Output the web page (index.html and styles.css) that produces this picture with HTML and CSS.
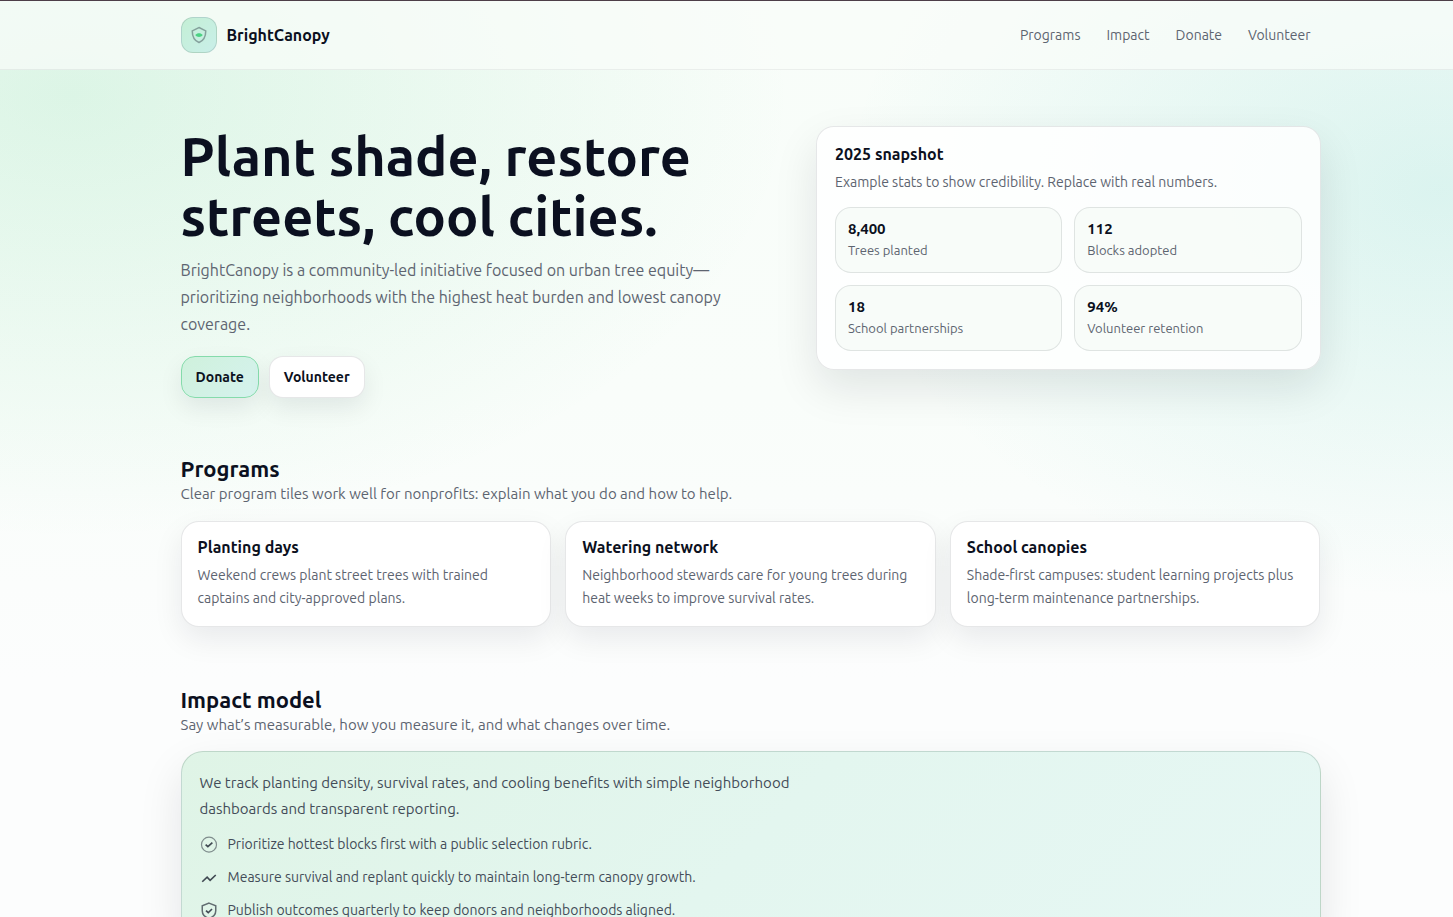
FILE: index.html
```
<!DOCTYPE html>
<html lang="en">
<head>
<meta charset="utf-8">
<meta name="viewport" content="width=device-width, initial-scale=1">
<title>BrightCanopy</title>
<link rel="stylesheet" href="styles.css">
</head>
<body>
<header class="site-header">
  <div class="wrap header-row">
    <a class="brand" href="#top">
      <span class="brand-mark">
        <svg width="18" height="18" viewBox="0 0 24 24" fill="none" aria-hidden="true">
          <path d="M12 2l9 4.500c0 8-2 12.500-9 15.500-7-3-9-7.500-9-15.500L12 2z" stroke="#0b1020" stroke-opacity=".35" stroke-width="2"/>
          <path d="M7 12c1.500-2 3-2.500 5-2.500s3.500.5 5 2.500c-1.500 2-3 2.500-5 2.500S8.500 14 7 12z" fill="#4bd283"/>
        </svg>
      </span>
      BrightCanopy
    </a>
    <nav class="nav" aria-label="Main">
      <a href="#programs">Programs</a>
      <a href="#impact">Impact</a>
      <a href="#donate">Donate</a>
      <a href="#volunteer">Volunteer</a>
    </nav>
  </div>
</header>

<main id="top">
  <section class="wrap hero">
    <div>
      <h1>Plant shade, restore streets, cool cities.</h1>
      <p class="lead">BrightCanopy is a community-led initiative focused on urban tree equity—prioritizing neighborhoods with the highest heat burden and lowest canopy coverage.</p>
      <div class="actions">
        <a class="btn btn-primary" href="#donate">Donate</a>
        <a class="btn" href="#volunteer">Volunteer</a>
      </div>
    </div>
    <aside class="snapshot">
      <h3>2025 snapshot</h3>
      <p>Example stats to show credibility. Replace with real numbers.</p>
      <div class="stats">
        <div class="stat"><strong>8,400</strong><span>Trees planted</span></div>
        <div class="stat"><strong>112</strong><span>Blocks adopted</span></div>
        <div class="stat"><strong>18</strong><span>School partnerships</span></div>
        <div class="stat"><strong>94%</strong><span>Volunteer retention</span></div>
      </div>
    </aside>
  </section>

  <section class="wrap section" id="programs">
    <h2>Programs</h2>
    <p class="sub">Clear program tiles work well for nonprofits: explain what you do and how to help.</p>
    <div class="cards">
      <article class="card">
        <h3>Planting days</h3>
        <p>Weekend crews plant street trees with trained captains and city-approved plans.</p>
      </article>
      <article class="card">
        <h3>Watering network</h3>
        <p>Neighborhood stewards care for young trees during heat weeks to improve survival rates.</p>
      </article>
      <article class="card">
        <h3>School canopies</h3>
        <p>Shade-first campuses: student learning projects plus long-term maintenance partnerships.</p>
      </article>
    </div>
  </section>

  <section class="wrap section" id="impact">
    <h2>Impact model</h2>
    <p class="sub">Say what’s measurable, how you measure it, and what changes over time.</p>
    <div class="panel">
      <p>We track planting density, survival rates, and cooling benefits with simple neighborhood dashboards and transparent reporting.</p>
      <ul class="checks">
        <li>
          <svg width="18" height="18" viewBox="0 0 24 24" fill="none" stroke="#0b1020" aria-hidden="true">
            <circle cx="12" cy="11.500" r="10" stroke-opacity=".45" stroke-width="1.600"/>
            <path d="M7.500 11.500l3 2.800 6-5.500" stroke-opacity=".75" stroke-width="2.200"/>
          </svg>
          Prioritize hottest blocks first with a public selection rubric.
        </li>
        <li>
          <svg width="18" height="18" viewBox="0 0 24 24" fill="none" stroke="#0b1020" aria-hidden="true">
            <path d="M3 17l6.500-6 4 4 7.500-7" stroke-opacity=".75" stroke-width="2.200"/>
          </svg>
          Measure survival and replant quickly to maintain long-term canopy growth.
        </li>
        <li>
          <svg width="18" height="18" viewBox="0 0 24 24" fill="none" stroke="#0b1020" aria-hidden="true">
            <path d="M12 1.500l9 3.500v6.500c0 5-3.500 8.500-9 10.500-5.500-2-9-5.500-9-10.500V5l9-3.500z" stroke-opacity=".6" stroke-width="2"/>
            <path d="M8 11.500l3 2.800 5-5" stroke-opacity=".75" stroke-width="2.200"/>
          </svg>
          Publish outcomes quarterly to keep donors and neighborhoods aligned.
        </li>
      </ul>
    </div>
  </section>
</main>
</body>
</html>
```
FILE: styles.css
```
* { box-sizing: border-box; }

body {
  margin: 0;
  font-family: Ubuntu, "Noto Sans", sans-serif;
  font-size: 14px;
  line-height: 23px;
  color: #0b1020;
  background:
    radial-gradient(1200px 740px at 5% 95px, rgba(60, 200, 120, .15), transparent 60%),
    radial-gradient(960px 660px at 99% 190px, rgba(50, 190, 180, .15), transparent 62%),
    linear-gradient(180deg, #f8fdf9 0, #f9fdfa 400px, #fcfdfd 680px);
  background-repeat: no-repeat;
}

h1, h2, h3, p, ul { margin: 0; }
a { color: inherit; text-decoration: none; }

.wrap {
  max-width: 1188px;
  margin: 0 auto;
  padding-left: 48px;
}

.site-header {
  border-top: 1px solid #4d3e48;
  border-bottom: 1px solid rgba(11, 16, 32, .06);
  background: rgba(250, 252, 250, .7);
}
.header-row {
  display: flex;
  align-items: center;
  justify-content: space-between;
  min-height: 68px;
}
.brand {
  display: flex;
  align-items: center;
  gap: 10px;
  font-size: 16px;
  font-weight: 600;
}
.brand-mark {
  display: grid;
  place-items: center;
  width: 36px;
  height: 36px;
  border: 1px solid rgba(11, 16, 32, .12);
  border-radius: 12px;
  background: linear-gradient(135deg, #c4efd5, #c9efe9);
}
.nav { display: flex; gap: 6px; color: #5d6470; }
.nav a { padding: 8px 10px; }

.hero {
  display: grid;
  grid-template-columns: 607fr 504fr;
  gap: 28px;
  align-items: start;
  padding-top: 56px;
}
h1 { font-size: 54px; line-height: 60px; font-weight: 600; }
.lead {
  max-width: 560px;
  margin-top: 11px;
  font-size: 16px;
  line-height: 27px;
  color: #5d6470;
}
.actions { display: flex; gap: 10px; margin-top: 18px; }
.btn {
  padding: 9px 14px;
  line-height: 22px;
  font-weight: 700;
  border: 1px solid rgba(11, 16, 32, .1);
  border-radius: 14px;
  background: #fff;
  box-shadow: 0 10px 24px rgba(11, 16, 32, .08);
}
.btn-primary {
  border-color: #85dbab;
  background: linear-gradient(135deg, #cff1dc, #d5f2ee);
}

.snapshot {
  padding: 16px 18px 18px;
  border: 1px solid rgba(11, 16, 32, .1);
  border-radius: 18px;
  background: rgba(255, 255, 255, .86);
  box-shadow: 0 18px 44px rgba(11, 16, 32, .1);
}
h3 { font-size: 16px; line-height: 23px; font-weight: 600; }
.snapshot p, .card p { margin-top: 5px; color: #5d6470; }
.stats {
  display: grid;
  grid-template-columns: 1fr 1fr;
  gap: 12px;
  margin-top: 13px;
}
.stat {
  display: grid;
  padding: 10px 12px 11px;
  border: 1px solid rgba(11, 16, 32, .1);
  border-radius: 16px;
  background: rgba(246, 251, 248, .8);
}
.stat strong { font-size: 15px; line-height: 22px; font-weight: 700; }
.stat span { font-size: 13px; line-height: 21px; color: #5d6470; }

.section { padding-top: 56px; }
.section + .section { padding-top: 58px; }
h2 { font-size: 22px; line-height: 30px; font-weight: 600; }
.sub { font-size: 15px; line-height: 20px; color: #5d6470; }
.cards {
  display: grid;
  grid-template-columns: repeat(3, 1fr);
  gap: 14px;
  margin-top: 17px;
}
.card {
  padding: 14px 16px 16px;
  border: 1px solid rgba(11, 16, 32, .1);
  border-radius: 18px;
  background: #fff;
  box-shadow: 0 12px 30px rgba(11, 16, 32, .08);
}

.panel {
  margin-top: 16px;
  padding: 18px;
  border: 1px solid rgba(11, 60, 40, .16);
  border-radius: 22px;
  background: linear-gradient(135deg, #dff4e6, #e3f6ef 50%, #e6f7f4);
  box-shadow: 0 18px 44px rgba(11, 16, 32, .1);
  color: #434c58;
}
.panel p { max-width: 620px; font-size: 15px; line-height: 26px; }
.checks {
  display: grid;
  gap: 10px;
  margin-top: 11px;
  padding: 0;
  list-style: none;
}
.checks li { display: flex; align-items: center; gap: 10px; }
.checks svg { flex: none; }

@media (max-width: 800px) {
  .wrap { padding-left: 20px; padding-right: 20px; }
  .hero, .cards { grid-template-columns: 1fr; }
}
```
